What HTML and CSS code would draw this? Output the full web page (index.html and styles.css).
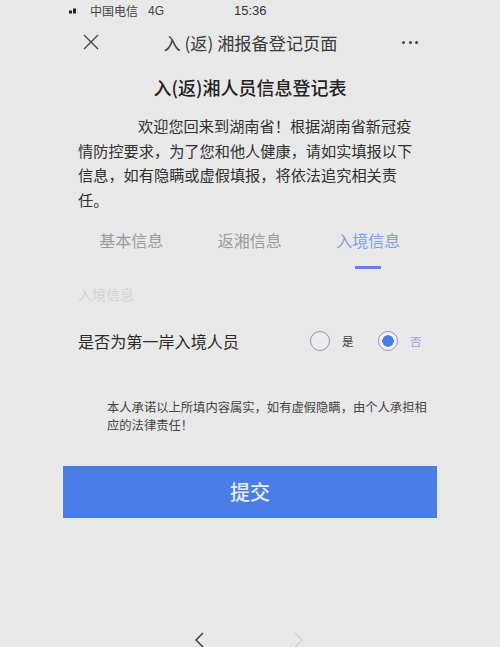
FILE: index.html
```html
<!DOCTYPE html>
<html lang="zh">
<head>
<meta charset="utf-8">
<title>入(返)湘报备登记页面</title>
<link rel="stylesheet" href="styles.css">
</head>
<body>
<div class="page">
  <div class="status">
    <svg class="signal" width="10" height="6" viewBox="0 0 10 6"><rect x="0" y="2.5" width="3" height="3" fill="#222"/><rect x="4" y="0.5" width="3" height="5" fill="#222"/><rect x="8" y="0" width="1" height="6" fill="#d4d4d4"/></svg>
    <span class="carrier">中国电信</span>
    <span class="net">4G</span>
    <span class="time">15:36</span>
  </div>
  <div class="nav">
    <svg class="close" width="16" height="16" viewBox="0 0 16 16"><path d="M1 1L15 15M15 1L1 15" stroke="#444" stroke-width="1.3" fill="none"/></svg>
    <div class="nav-title">入 (返) 湘报备登记页面</div>
    <div class="dots"><i></i><i></i><i></i></div>
  </div>
  <h1 class="title">入(返)湘人员信息登记表</h1>
  <p class="intro">欢迎您回来到湖南省！根据湖南省新冠疫情防控要求，为了您和他人健康，请如实填报以下信息，如有隐瞒或虚假填报，将依法追究相关责任。</p>
  <div class="tabs">
    <div class="tab">基本信息</div>
    <div class="tab">返湘信息</div>
    <div class="tab active">入境信息</div>
  </div>
  <div class="section">入境信息</div>
  <div class="row">
    <div class="label">是否为第一岸入境人员</div>
    <div class="radios">
      <span class="radio"></span><span class="opt">是</span>
      <span class="radio on"></span><span class="opt sel">否</span>
    </div>
  </div>
  <p class="pledge">本人承诺以上所填内容属实，如有虚假隐瞒，由个人承担相应的法律责任！</p>
  <button class="submit" type="button">提交</button>
  <div class="bottom">
    <svg width="10" height="16" viewBox="0 0 10 16"><path d="M9 1L2 8L9 15" stroke="#333" stroke-width="1.4" fill="none"/></svg>
    <svg width="10" height="16" viewBox="0 0 10 16"><path d="M1 1L8 8L1 15" stroke="#d0d0d0" stroke-width="1.4" fill="none"/></svg>
  </div>
</div>
</body>
</html>
```
FILE: styles.css
```css
html, body {
  margin: 0;
  padding: 0;
  background: #e8e8e8;
}
.page {
  width: 500px;
  height: 647px;
  overflow: hidden;
  font-family: "Noto Sans CJK SC", "Liberation Sans", sans-serif;
  color: #2a2a2a;
}
.status {
  height: 21px;
  display: flex;
  align-items: center;
  padding-left: 69px;
  font-family: "Liberation Sans", "Noto Sans CJK SC", sans-serif;
  font-size: 12px;
  color: #444;
}
.signal { margin-right: 11px; }
.carrier { width: 58px; }
.net { width: 86px; }
.time { font-size: 13px; color: #333; }
.nav {
  height: 42px;
  display: flex;
  align-items: center;
  padding: 0 82px 0 83px;
  position: relative;
}
.close { flex: none; }
.nav-title {
  flex: 1;
  text-align: center;
  font-size: 17.2px;
  color: #3a3a3a;
}
.dots {
  display: flex;
  gap: 3.5px;
  flex: none;
}
.dots i {
  width: 3px;
  height: 3px;
  border-radius: 50%;
  background: #444;
}
.title {
  margin: 11px 0 0;
  height: 26px;
  line-height: 26px;
  text-align: center;
  font-size: 18px;
  font-weight: 500;
  color: #222;
}
.intro {
  margin: 13px 0 0;
  padding: 0 76px 0 78px;
  font-size: 15.2px;
  line-height: 24.5px;
  text-indent: 60px;
  color: #2f2f2f;
}
.tabs {
  display: grid;
  grid-template-columns: repeat(3, 118.5px);
  padding-left: 72px;
  margin-top: 13px;
}
.tab {
  height: 45px;
  line-height: 33px;
  text-align: center;
  font-size: 16px;
  color: #9b9ba6;
  position: relative;
}
.tab.active { color: #7f9fdc; }
.tab.active::after {
  content: "";
  position: absolute;
  left: 46px;
  bottom: 0;
  width: 26px;
  height: 3px;
  background: #5f82dc;
}
.section {
  margin-top: 15px;
  padding-left: 78px;
  font-size: 14px;
  line-height: 20px;
  color: #d2d2d8;
}
.row {
  margin-top: 22px;
  height: 30px;
  display: flex;
  align-items: center;
  padding-left: 78px;
}
.label {
  width: 232px;
  font-size: 16.1px;
  color: #2a2a2a;
}
.radios {
  display: flex;
  align-items: center;
}
.radio {
  box-sizing: border-box;
  width: 20px;
  height: 20px;
  border: 1px solid #8f92c4;
  border-radius: 50%;
  background: #ececec;
}
.radio.on {
  background: radial-gradient(circle, #4a7de8 0 5.5px, #f2f2f2 6px);
}
.opt {
  font-size: 11.5px;
  color: #444;
  margin-left: 12px;
  width: 36px;
}
.opt.sel { color: #8fa8d8; }
.pledge {
  margin: 42px 0 0;
  padding: 0 70px 0 107px;
  font-size: 12.3px;
  line-height: 18px;
  color: #444;
}
.submit {
  display: block;
  margin: 32px 0 0 63px;
  width: 374px;
  height: 52px;
  border: none;
  border-radius: 0;
  padding: 0 0 2px;
  background: #4a7de6;
  color: #e8ecf6;
  font-family: inherit;
  font-size: 20px;
  font-weight: 500;
}
.bottom {
  margin-top: 114px;
  display: flex;
  gap: 90px;
  padding-left: 194px;
}
```
